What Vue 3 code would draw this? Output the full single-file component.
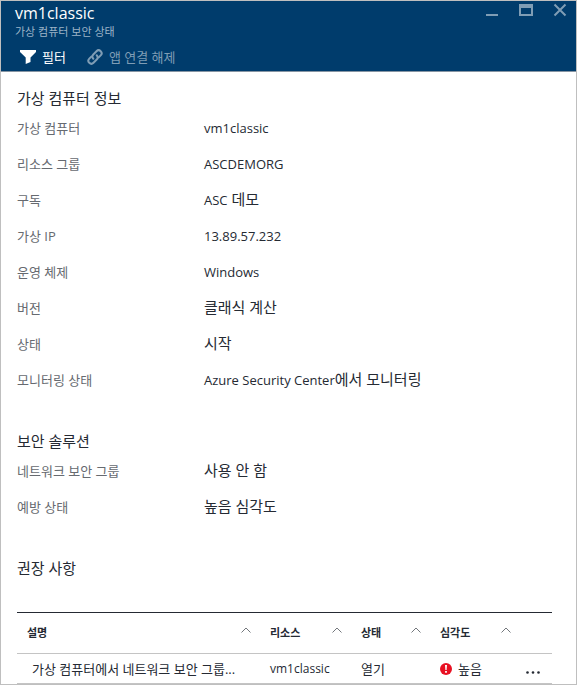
<script setup>
const sections = [
  {
    title: '가상 컴퓨터 정보',
    rows: [
      { label: '가상 컴퓨터', latin: 'vm1classic' },
      { label: '리소스 그룹', latin: 'ASCDEMORG' },
      { label: '구독', latin: 'ASC', korean: ' 데모' },
      { label: '가상 IP', latin: '13.89.57.232' },
      { label: '운영 체제', latin: 'Windows' },
      { label: '버전', korean: '클래식 계산' },
      { label: '상태', korean: '시작' },
      { label: '모니터링 상태', latin: 'Azure Security Center', korean: '에서 모니터링' },
    ],
  },
  {
    title: '보안 솔루션',
    rows: [
      { label: '네트워크 보안 그룹', korean: '사용 안 함' },
      { label: '예방 상태', korean: '높음 심각도' },
    ],
  },
]
const columns = [
  { name: '설명', key: 'description' },
  { name: '리소스', key: 'resource' },
  { name: '상태', key: 'state' },
  { name: '심각도', key: 'severity' },
]
</script>

<template>
  <div class="blade">
    <header class="header">
      <div class="titlebar">
        <div>
          <h1>vm1classic</h1>
          <p class="subtitle">가상 컴퓨터 보안 상태</p>
        </div>
        <div class="window-buttons">
          <button type="button" aria-label="최소화">
            <svg width="14" height="14" viewBox="0 0 14 14"><path d="M1 12h12" stroke="currentColor" stroke-width="2" /></svg>
          </button>
          <button type="button" aria-label="최대화">
            <svg width="14" height="14" viewBox="0 0 14 14"><path fill="currentColor" fill-rule="evenodd" d="M0 1h14v12H0zM2 5v6h10V5z" /></svg>
          </button>
          <button type="button" aria-label="닫기">
            <svg width="14" height="14" viewBox="0 0 14 14"><path d="M1.5 1.5l11 11M12.500 1.500l-11 11" stroke="currentColor" stroke-width="2" /></svg>
          </button>
        </div>
      </div>
      <div class="toolbar">
        <button type="button" class="command">
          <svg width="16" height="14" viewBox="0 0 16 14"><path fill="currentColor" d="M0 0h16v2l-5.500 5.500v4.500L5.700 14V7.500L0 2z" /></svg>
          필터
        </button>
        <button type="button" class="command" disabled>
          <svg width="16" height="16" viewBox="0 0 16 16">
            <g fill="none" stroke="currentColor" stroke-width="2" stroke-linecap="round">
              <path d="M6.300 9.700a3 3 0 0 1 0-4.200l3.200-3.300a2.900 2.900 0 0 1 4.200 4.200l-2 2" />
              <path d="M9.700 6.300a3 3 0 0 1 0 4.200l-3.200 3.300a2.900 2.900 0 0 1-4.200-4.200l2-2" />
            </g>
          </svg>
          앱 연결 해제
        </button>
      </div>
    </header>

    <main>
      <section v-for="s in sections" :key="s.title">
        <h2>{{ s.title }}</h2>
        <dl>
          <div v-for="r in s.rows" :key="r.label" class="row">
            <dt>{{ r.label }}</dt>
            <dd><span v-if="r.latin" class="latin">{{ r.latin }}</span>{{ r.korean }}</dd>
          </div>
        </dl>
      </section>

      <section>
        <h2>권장 사항</h2>
        <table>
          <colgroup>
            <col class="c-description" /><col class="c-resource" /><col class="c-state" /><col class="c-severity" /><col />
          </colgroup>
          <thead>
            <tr>
              <th v-for="c in columns" :key="c.key" scope="col">
                <button type="button" class="sort">
                  {{ c.name }}
                  <svg width="10" height="6" viewBox="0 0 10 6"><path d="M.5 5.500L5 1l4.500 4.500" fill="none" stroke="currentColor" /></svg>
                </button>
              </th>
              <td></td>
            </tr>
          </thead>
          <tbody>
            <tr>
              <td class="description">가상 컴퓨터에서 네트워크 보안 그룹...</td>
              <td class="resource">vm1classic</td>
              <td>열기</td>
              <td>
                <span class="severity">
                  <svg width="12" height="12" viewBox="0 0 12 12"><circle cx="6" cy="6" r="6" fill="#e81123" /><path d="M5 2h2l-.4 5H5.400zM5.100 8h1.800v1.800H5.100z" fill="#fff" /></svg>
                  높음
                </span>
              </td>
              <td class="actions">
                <button type="button" class="more" aria-label="추가 작업">
                  <svg width="14" height="3" viewBox="0 0 14 3"><g fill="currentColor"><circle cx="1.500" cy="1.500" r="1.300" /><circle cx="7" cy="1.500" r="1.300" /><circle cx="12.500" cy="1.500" r="1.300" /></g></svg>
                </button>
              </td>
            </tr>
          </tbody>
        </table>
      </section>
    </main>
  </div>
</template>

<style>
body {
  margin: 0;
  background: #fff;
}
</style>

<style scoped>
.blade {
  box-sizing: border-box;
  min-height: 100vh;
  border: 1px solid #bfbfbf;
  font-family: "Open Sans", "Noto Sans CJK KR", sans-serif;
  font-size: 13px;
  color: #252a33;
}
h1, h2, p, dl, dd {
  margin: 0;
  font-weight: 400;
}
button {
  padding: 0;
  border: 0;
  background: none;
  font: inherit;
  color: inherit;
}
svg {
  display: block;
  flex: none;
}
.header {
  background: #003c6c;
  border-bottom: 1px solid #8795a3;
  padding: 2px 9px 3px 14px;
  color: #fff;
}
.titlebar {
  display: flex;
  justify-content: space-between;
}
h1 {
  font-size: 16px;
  line-height: 20px;
}
.subtitle {
  font-size: 11px;
  line-height: 18px;
  color: #9db4c8;
}
.window-buttons {
  display: flex;
  align-items: flex-start;
  gap: 20px;
  color: #7f9db5;
}
.toolbar {
  display: flex;
  gap: 21px;
  padding: 5px 0 0 5px;
}
.command {
  display: flex;
  align-items: center;
  gap: 6px;
  line-height: 22px;
}
.command:disabled {
  color: #7f9db5;
}
main {
  padding: 15px 24px 0 16px;
}
section + section {
  margin-top: 33px;
}
h2 {
  font-size: 15px;
  line-height: 22px;
}
.row {
  display: grid;
  grid-template-columns: 187px 1fr;
  align-items: center;
  height: 36px;
}
dt {
  color: #666a70;
}
dd {
  font-size: 15px;
  line-height: 22px;
}
.latin {
  font-size: 13px;
}
table {
  width: 100%;
  margin-top: 33px;
  table-layout: fixed;
  border-collapse: separate;
  border-spacing: 0;
  border-top: 1px solid #252a33;
}
.c-description {
  width: 243px;
}
.c-resource {
  width: 91px;
}
.c-state {
  width: 79px;
}
.c-severity {
  width: 90px;
}
th, td {
  box-sizing: border-box;
  padding: 0 0 0 10px;
  border-bottom: 1px solid #c4c4c4;
  text-align: left;
  white-space: nowrap;
}
thead tr {
  height: 41px;
}
tbody tr {
  height: 30px;
}
tbody td {
  line-height: 20px;
}
.sort {
  display: flex;
  justify-content: space-between;
  align-items: center;
  width: 100%;
  padding-right: 9px;
  font-size: 11px;
  font-weight: 700;
  line-height: 20px;
}
.sort svg {
  margin-bottom: 6px;
  color: #73777c;
}
tbody .description {
  padding-left: 15px;
}
.resource {
  font-size: 12px;
}
.severity {
  display: flex;
  align-items: center;
  gap: 6px;
}
tbody .actions {
  padding-left: 6px;
}
.more {
  display: block;
  padding-top: 8px;
}
</style>
